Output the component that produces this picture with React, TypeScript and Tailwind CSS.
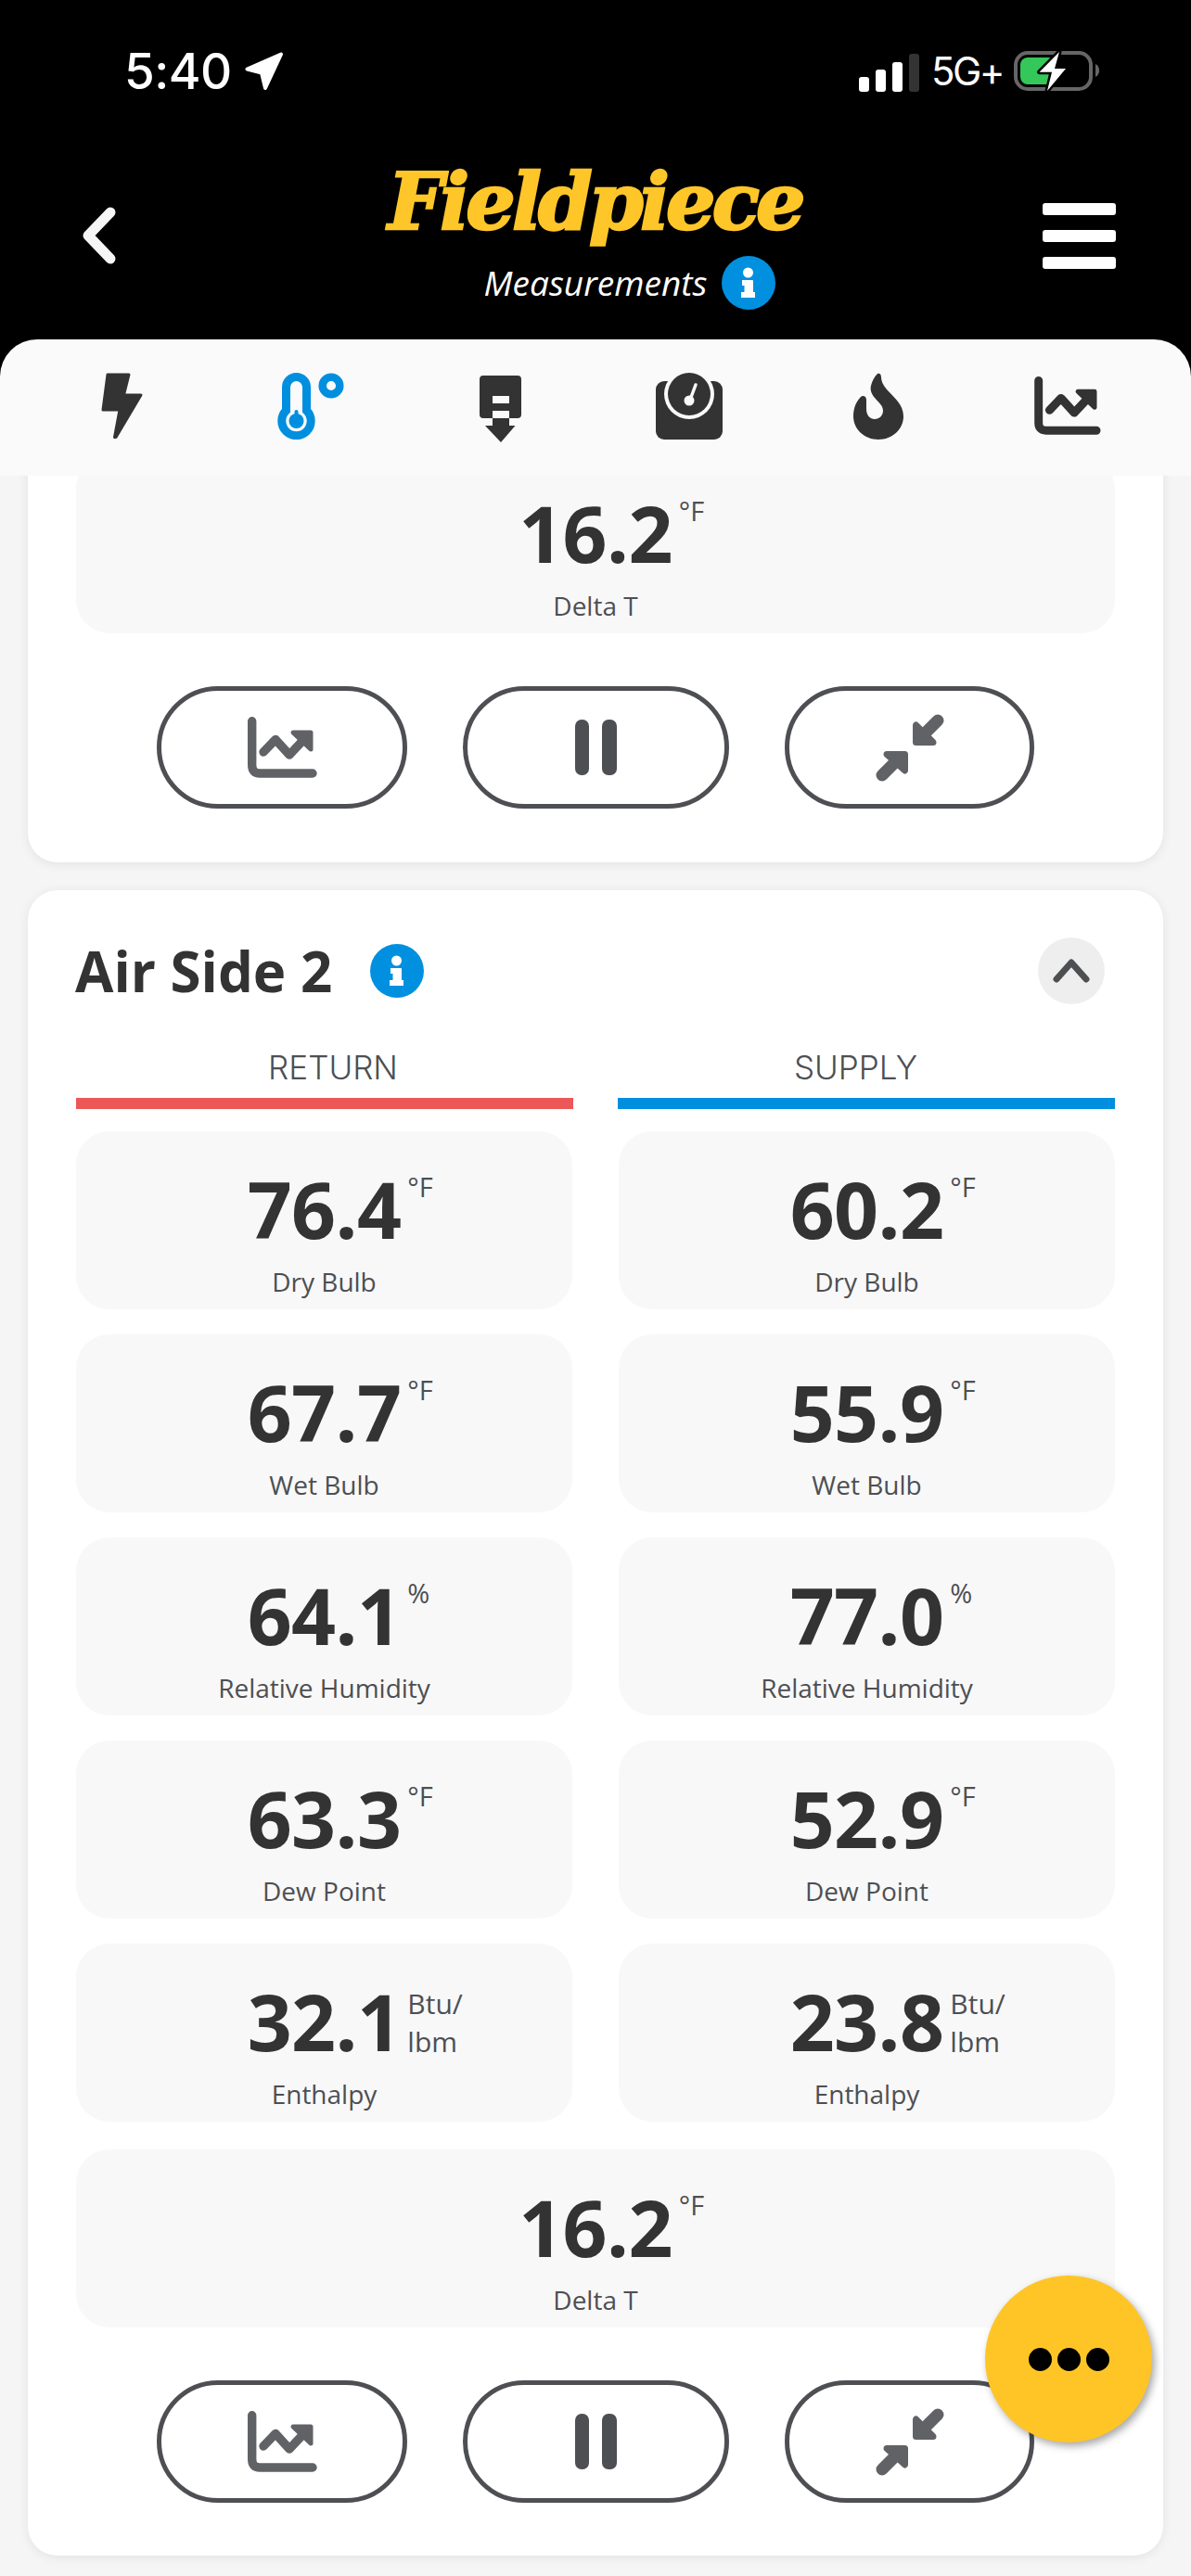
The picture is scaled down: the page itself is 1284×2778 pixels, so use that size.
import React from "react";

function InfoIcon() {
  return (
    <svg width="58" height="58" viewBox="0 0 58 58" className="shrink-0">
      <circle cx="29" cy="29" r="29" fill="#0090df" />
      <circle cx="28.5" cy="18" r="5.5" fill="#fff" />
      <path d="M22 26 H33 a1 1 0 0 1 1 1 V39 H36 V45 H21 V39 H24.5 V32 H22 Z" fill="#fff" />
    </svg>
  );
}

function ChartIcon({ color, w, h }: { color: string; w: number; h: number }) {
  return (
    <svg width={w} height={h} viewBox="0 0 75 66" fill="none" className="block">
      <path d="M4.7 4.7 V52 Q4.7 61 13 61 H70" stroke={color} strokeWidth="9.4" strokeLinecap="round" />
      <path d="M17 38 L30 24.5 L45 41 L62 23" stroke={color} strokeWidth="9.4" strokeLinecap="round" strokeLinejoin="round" />
      <path d="M49 17 H68 V35 Z" fill={color} stroke={color} strokeWidth="5" strokeLinejoin="round" />
    </svg>
  );
}

function PauseIcon() {
  return (
    <svg width="45" height="60" viewBox="0 0 45 60" className="block">
      <rect x="0" y="0" width="15" height="60" rx="7" fill="#4d4f53" />
      <rect x="29" y="0" width="16" height="60" rx="7" fill="#4d4f53" />
    </svg>
  );
}

function CompressIcon() {
  const c = "#606266";
  return (
    <svg width="75" height="75" viewBox="0 0 75 75" fill="none" className="block">
      <path d="M44.5 13 V31.5 H63 Z" fill={c} stroke={c} strokeWidth="7" strokeLinejoin="round" />
      <line x1="52" y1="24" x2="68" y2="8" stroke={c} strokeWidth="13" strokeLinecap="round" />
      <path d="M32.5 62 V44.5 H13 Z" fill={c} stroke={c} strokeWidth="7" strokeLinejoin="round" />
      <line x1="23" y1="52" x2="8" y2="67" stroke={c} strokeWidth="13" strokeLinecap="round" />
    </svg>
  );
}

function Reading({ value, unit, label, two }: { value: string; unit?: string; label: string; two?: boolean }) {
  return (
    <div className="h-[192px] rounded-[36px] bg-[#f8f8f8] pt-[34px] flex flex-col items-center">
      <div className="relative text-[84px] leading-[100px] font-bold text-[#333333] tracking-[-0.6px]">
        {value}
        {two ? (
          <span className="absolute left-full top-[10px] ml-[7px] text-[30px] leading-[41px] font-normal tracking-normal text-[#4d4f53] whitespace-nowrap">
            Btu/
            <br />
            lbm
          </span>
        ) : (
          <span className="absolute left-full top-[6px] ml-[7px] text-[29px] leading-[40px] font-normal tracking-normal text-[#4d4f53] whitespace-nowrap">
            {unit}
          </span>
        )}
      </div>
      <div className="mt-[10px] text-[28px] leading-[36px] font-medium text-[#4d4f53]">{label}</div>
    </div>
  );
}

function ActionRow() {
  const btn = "h-[132px] rounded-[66px] border-[5px] border-[#4d4f53] flex items-center justify-center";
  return (
    <div className="flex justify-center gap-[60px] mt-[57px]">
      <div className={`${btn} w-[270px]`}>
        <ChartIcon color="#606266" w={75} h={66} />
      </div>
      <div className={`${btn} w-[287px]`}>
        <PauseIcon />
      </div>
      <div className={`${btn} w-[269px]`}>
        <CompressIcon />
      </div>
    </div>
  );
}

const rows = [
  { label: "Dry Bulb", l: "76.4", r: "60.2", unit: "°F" },
  { label: "Wet Bulb", l: "67.7", r: "55.9", unit: "°F" },
  { label: "Relative Humidity", l: "64.1", r: "77.0", unit: "%" },
  { label: "Dew Point", l: "63.3", r: "52.9", unit: "°F" },
];

export default function App() {
  return (
    <div className="relative w-[1284px] h-[2778px] overflow-hidden bg-black flex flex-col font-['Open_Sans',sans-serif]">
      {/* header */}
      <div className="h-[366px] shrink-0 bg-black">
        <div className="flex justify-between items-start pt-[52px] pl-[134px] pr-[97px] h-[170px]">
          <div className="flex items-center h-[50px]">
            <span className="font-['Inter',sans-serif] text-[53px] leading-[50px] font-medium text-white tracking-[-0.5px]">5:40</span>
            <svg width="42" height="42" viewBox="0 0 42 42" className="ml-[14px]">
              <path d="M2.5 18.5 L39 2.5 L22 39 L18 22.5 Z" fill="#fff" stroke="#fff" strokeWidth="4" strokeLinejoin="round" />
            </svg>
          </div>
          <div className="flex items-center h-[50px]">
            <div className="flex items-end gap-[7px] h-[41px] mt-[3px]">
              <div className="w-[11px] h-[16px] rounded-[3px] bg-white" />
              <div className="w-[11px] h-[24px] rounded-[3px] bg-white" />
              <div className="w-[11px] h-[32px] rounded-[3px] bg-white" />
              <div className="w-[11px] h-[41px] rounded-[3px] bg-[#333333]" />
            </div>
            <span className="ml-[13px] font-['Inter',sans-serif] text-[42px] leading-[50px] text-white tracking-[-2.5px] w-[90px]">5G+</span>
            <svg width="94" height="48" viewBox="0 0 94 48" className="-ml-[1px]">
              <rect x="2" y="4" width="81" height="39" rx="13" fill="none" stroke="#666666" strokeWidth="4" />
              <rect x="7" y="9" width="38" height="29" rx="8" fill="#34c759" />
              <path d="M88 16 a8 8 0 0 1 0 14 Z" fill="#666666" />
              <path d="M49 3 L27.5 24.7 H41 L36 45 L56 21 H44 Z" fill="#fff" stroke="#000" strokeWidth="5" strokeLinejoin="round" paintOrder="stroke" />
            </svg>
          </div>
        </div>
        <div className="flex justify-between pl-[88px] pr-[81px]">
          <div className="w-[71px]">
            <svg width="38" height="62" viewBox="0 0 38 62" className="mt-[53px]">
              <path d="M31 6 L7 31 L31 56" fill="none" stroke="#f5f5f5" strokeWidth="11" strokeLinecap="round" strokeLinejoin="round" />
            </svg>
          </div>
          <div className="flex flex-col items-center">
            <div className="h-[90px] mt-[3px] font-['DejaVu_Serif',serif] font-bold italic text-[84px] leading-[90px] text-[#ffc629] tracking-[-3.8px] [-webkit-text-stroke:2.5px_#ffc629]">
              Fieldpiece
            </div>
            <div className="flex items-center mt-[13px] pl-[75px] gap-[16px]">
              <span className="text-[37px] leading-[58px] italic font-medium text-white">Measurements</span>
              <InfoIcon />
            </div>
          </div>
          <div className="w-[79px] mt-[49px] flex flex-col gap-[16px]">
            <div className="h-[13px] rounded-[3px] bg-white" />
            <div className="h-[13px] rounded-[3px] bg-white" />
            <div className="h-[13px] rounded-[3px] bg-white" />
          </div>
        </div>
      </div>

      {/* tab bar */}
      <div className="h-[147px] shrink-0 rounded-t-[40px] bg-[#fafafa] pt-[36px] pl-[29px]">
        <div className="grid grid-cols-[repeat(6,204px)] justify-items-center items-start">
          <svg width="45" height="72" viewBox="0 0 45 72">
            <path d="M7 2 H30 L24.5 24 H43 L16 69.5 H14.5 L20 40 H2 Z" fill="#333333" stroke="#333333" strokeWidth="3" strokeLinejoin="round" />
          </svg>
          <svg width="72" height="72" viewBox="0 0 72 72" fill="none">
            <path d="M9.5 40.8 V15.5 a11 11 0 0 1 22 0 V40.8 A15.7 15.7 0 1 1 9.5 40.8 Z" stroke="#008fdf" strokeWidth="9" />
            <circle cx="20.5" cy="52" r="8" fill="#008fdf" />
            <rect x="18.5" y="40" width="4" height="10" rx="2" fill="#008fdf" />
            <circle cx="58" cy="14" r="9.3" stroke="#008fdf" strokeWidth="8.5" />
          </svg>
          <svg width="45" height="72" viewBox="0 0 45 72" className="mt-[3px]">
            <path fillRule="evenodd" d="M4 0 H41 a4 4 0 0 1 4 4 V42 a4 4 0 0 1 -4 4 H32 V38 H14 V46 H4 a4 4 0 0 1 -4 -4 V4 a4 4 0 0 1 4 -4 Z M14 22 V30 H32 V22 Z" fill="#333333" />
            <path d="M14 46 H32 V54 H38.5 L23 72 L6 54 H14 Z" fill="#333333" />
          </svg>
          <svg width="72" height="72" viewBox="0 0 72 72">
            <path d="M9 9 H63 a9 9 0 0 1 9 9 V63 a9 9 0 0 1 -9 9 H9 a9 9 0 0 1 -9 -9 V18 a9 9 0 0 1 9 -9 Z" fill="#333333" />
            <circle cx="36" cy="23" r="27" fill="#fafafa" />
            <circle cx="36" cy="23" r="23" fill="#333333" />
            <line x1="43" y1="13" x2="37" y2="29" stroke="#fafafa" strokeWidth="3.5" strokeLinecap="round" />
            <circle cx="36" cy="30" r="5.5" fill="#fafafa" />
          </svg>
          <svg width="54" height="72" viewBox="0 0 54 72">
            <path d="M26 1 C28 0 30 1 30 5 C30 9 32 13 36 18 C44 27 54 34 54 47 C54 61 42 72 27 72 C12 72 0 61 0 47 C0 38 3 31 8 26 C10 24 14 25 14 29 L14 39 C14 46 18 50 23 50 C28 50 32 46 32 41 C32 35 27 32 23 27 C19 22 18 18 19 14 C20 9 23 4 26 1 Z" fill="#333333" />
          </svg>
          <div className="mt-[4px]">
            <ChartIcon color="#333333" w={72} h={63} />
          </div>
        </div>
      </div>

      {/* scrolling content */}
      <div className="flex-1 overflow-hidden bg-[#f5f5f5]">
        <div className="mx-[30px] -mt-[60px] rounded-[32px] bg-white px-[52px] pb-[58px] pt-[38px] shadow-[0_2px_12px_rgba(0,0,0,0.08)]">
          <Reading value="16.2" unit="°F" label="Delta T" />
          <ActionRow />
        </div>

        <div className="mx-[30px] mt-[30px] rounded-[32px] bg-white px-[52px] pt-[51px] pb-[57px] shadow-[0_2px_12px_rgba(0,0,0,0.08)]">
          <div className="flex items-center h-[72px] -ml-[1px] mr-[11px]">
            <h2 className="text-[60px] leading-[72px] font-bold text-[#333333]">Air Side 2</h2>
            <div className="ml-[41px]">
              <InfoIcon />
            </div>
            <div className="ml-auto w-[72px] h-[72px] rounded-full bg-[#eeeeee] flex items-center justify-center">
              <svg width="40" height="26" viewBox="0 0 40 26" fill="none">
                <path d="M4 22 L20 4 L36 22" stroke="#4d4f53" strokeWidth="7" strokeLinecap="round" strokeLinejoin="round" />
              </svg>
            </div>
          </div>

          <div className="grid grid-cols-2 gap-x-[48px] mt-[47px]">
            <div>
              <div className="pl-[18px] text-center font-['Inter',sans-serif] font-light text-[35px] leading-[42px] text-[#4d4f53]">RETURN</div>
              <div className="h-[12px] mt-[12px] bg-[#ec5757]" />
            </div>
            <div>
              <div className="pr-[23px] text-center font-['Inter',sans-serif] font-light text-[35px] leading-[42px] text-[#4d4f53]">SUPPLY</div>
              <div className="h-[12px] mt-[12px] bg-[#008fdf]" />
            </div>
          </div>

          <div className="grid grid-cols-2 gap-x-[50px] gap-y-[27px] mt-[24px]">
            {rows.map((r) => (
              <React.Fragment key={r.label}>
                <Reading value={r.l} unit={r.unit} label={r.label} />
                <Reading value={r.r} unit={r.unit} label={r.label} />
              </React.Fragment>
            ))}
            <Reading value="32.1" two label="Enthalpy" />
            <Reading value="23.8" two label="Enthalpy" />
          </div>

          <div className="mt-[30px]">
            <Reading value="16.2" unit="°F" label="Delta T" />
          </div>
          <ActionRow />
        </div>
      </div>

      {/* floating button */}
      <div className="absolute left-[1062px] top-[2454px] w-[180px] h-[180px] rounded-full bg-[#ffc526] shadow-[3px_4px_8px_rgba(0,0,0,0.35)] flex items-center justify-center gap-[6px]">
        <div className="w-[25px] h-[25px] rounded-full bg-black" />
        <div className="w-[25px] h-[25px] rounded-full bg-black" />
        <div className="w-[25px] h-[25px] rounded-full bg-black" />
      </div>
    </div>
  );
}
